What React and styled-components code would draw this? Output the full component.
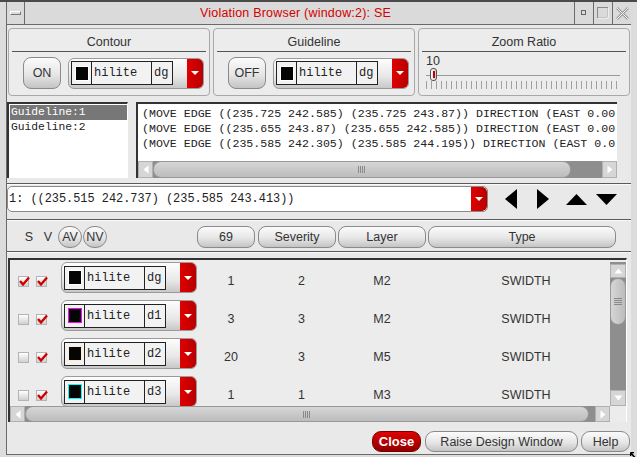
import React from 'react'
import styled, { createGlobalStyle } from 'styled-components'

const Global = createGlobalStyle`
  html, body { margin: 0; padding: 0; background: #d8d8d8; }
  body { font-family: "Liberation Sans", Arial, sans-serif; font-size: 12px; color: #333; }
`

const Screen = styled.div`
  width: 637px;
  height: 457px;
  background: #dcdcdc;
  border-top: 2px solid #4a4a4a;
  box-sizing: border-box;
  display: flex;
  flex-direction: column;
  overflow: hidden;
  position: relative;
`
const TitleBar = styled.div`
  height: 22px;
  margin-left: 6px;
  margin-right: 6px;
  display: flex;
  border-bottom: 1px solid #6a6a6a;
  border-left: 1px solid #6a6a6a;
  background: #dadada;
`
const MenuBox = styled.div`
  width: 17px;
  border-right: 1px solid #6a6a6a;
  display: flex;
  align-items: center;
  justify-content: center;
  span {
    width: 9px; height: 2px;
    border: 1px solid #777; border-top-color: #fff; border-left-color: #fff;
  }
`
const Title = styled.div`
  flex: 1;
  text-align: center;
  line-height: 22px;
  color: #d40000;
  font-size: 12.5px;
  letter-spacing: 0.2px;
  padding-right: 8px;
`
const WinBtn = styled.div`
  width: 18px;
  border-left: 1px solid #6a6a6a;
  display: flex;
  align-items: center;
  justify-content: center;
`
const Body = styled.div`
  flex: 1;
  margin-left: 6px;
  margin-right: 6px;
  margin-bottom: 2px;
  border-left: 1px solid #6a6a6a;
  border-bottom: 1px solid #6a6a6a;
  background: #e9e9e9;
  display: flex;
  flex-direction: column;
`
const TopRow = styled.div`
  margin-top: 3px;
  height: 68px;
  padding-left: 1px;
  display: flex;
  gap: 3px;
`
const Group = styled.div`
  width: ${p => p.$w}px;
  box-sizing: border-box;
  border: 1px solid #a8a8a8;
  border-radius: 4px;
  background: #ececec;
  padding: 0 3px;
  display: flex;
  flex-direction: column;
`
const GroupTitle = styled.div`
  height: 22px;
  border-bottom: 1px solid #555;
  text-align: center;
  line-height: 26px;
  font-size: 12.5px;
  color: #333;
`
const GroupContent = styled.div`
  display: flex;
  align-items: center;
  gap: 7px;
  padding-left: 11px;
  margin-top: 5px;
`
const PillButton = styled.div`
  width: ${p => p.$w}px;
  height: ${p => p.$h || 22}px;
  box-sizing: border-box;
  border: 1px solid #8a8a8a;
  border-radius: ${p => p.$r || 8}px;
  background: linear-gradient(#fbfbfb, #e6e6e6 55%, #c4c4c4);
  display: flex;
  align-items: center;
  justify-content: center;
  font-size: 12.5px;
  color: #333;
  flex-shrink: 0;
  margin-left: ${p => p.$ml || 0}px;
`
const Combo = styled.div`
  width: 136px;
  height: 31px;
  box-sizing: border-box;
  border: 1px solid #9a9a9a;
  border-radius: 6px;
  background: linear-gradient(#fdfdfd, #e8e8e8 60%, #c8c8c8);
  display: flex;
  align-items: center;
  padding-left: 2px;
  flex-shrink: 0;
  align-self: ${p => (p.$top ? 'flex-start' : 'auto')};
`
const ComboBox = styled.div`
  height: 24px;
  box-sizing: border-box;
  border: 1px solid #222;
  display: flex;
  background: #f2f2f2;
`
const SwatchCell = styled.div`
  width: 19px;
  border-right: 1px solid #222;
  display: flex;
  align-items: center;
  justify-content: center;
  span {
    width: 12px; height: 13px;
    background: #050505;
    border: 1px solid ${p => p.$ring};
  }
`
const NameCell = styled.div`
  width: ${p => p.$w}px;
  border-right: ${p => (p.$last ? 'none' : '1px solid #222')};
  font-family: "Liberation Mono", "Courier New", monospace;
  font-size: 12px;
  line-height: 22px;
  padding-left: 2px;
  box-sizing: border-box;
  color: #222;
`
const RedDrop = styled.div`
  margin-left: auto;
  width: 16px;
  height: 100%;
  border-radius: 0 5px 5px 0;
  background: linear-gradient(90deg, #e00000, #b80000);
  display: flex;
  align-items: center;
  justify-content: center;
  flex-shrink: 0;
  span {
    width: 0; height: 0;
    border-left: 4px solid transparent;
    border-right: 4px solid transparent;
    border-top: 4px solid #fff;
  }
`
const ZoomContent = styled.div`
  padding: 3px 0 0 4px;
  display: flex;
  flex-direction: column;
`
const ZoomValue = styled.div`
  font-size: 12.5px;
  line-height: 12px;
  color: #333;
`
const SliderTrack = styled.div`
  position: relative;
  margin-top: 8px;
  height: 1px;
  background: #999;
  width: 194px;
`
const SliderHandle = styled.div`
  position: absolute;
  left: 4px;
  top: -7px;
  width: 7px;
  height: 13px;
  box-sizing: border-box;
  border: 1px solid #555;
  border-radius: 3px;
  background: linear-gradient(90deg, #fff, #ccc);
  display: flex;
  justify-content: center;
  span { width: 2px; margin-top: 2px; height: 7px; background: #c00000; }
`
const Ticks = styled.div`
  margin-top: 5px;
  width: 192px;
  height: 8px;
  background: repeating-linear-gradient(90deg, #a0a0a0 0 1px, transparent 1px 5px);
`
const MidRow = styled.div`
  margin-top: 6px;
  height: 76px;
  display: flex;
  gap: 8px;
`
const ListBox = styled.div`
  width: 121px;
  box-sizing: border-box;
  border-top: 2px solid #333;
  border-left: 2px solid #333;
  border-right: 1px solid #fff;
  background: #fff;
  padding-top: 1px;
  padding-left: 1px;
`
const ListItem = styled.div`
  height: 15px;
  line-height: 15px;
  padding-left: 1px;
  font-family: "Liberation Mono", "Courier New", monospace;
  font-size: 11.3px;
  background: ${p => (p.$sel ? '#777' : 'transparent')};
  color: ${p => (p.$sel ? '#fff' : '#222')};
`
const TextPane = styled.div`
  width: 481px;
  box-sizing: border-box;
  border-top: 2px solid #333;
  border-left: 2px solid #333;
  background: #fff;
  display: flex;
  flex-direction: column;
  overflow: hidden;
`
const TextLines = styled.div`
  flex: 1;
  padding: 2px 0 0 4px;
  font-family: "Liberation Mono", "Courier New", monospace;
  font-size: 11.6px;
  line-height: 15px;
  white-space: pre;
  color: #222;
  overflow: hidden;
`
const HScroll = styled.div`
  height: ${p => p.$h || 16}px;
  display: flex;
  background: #8e8e8e;
  flex-shrink: 0;
`
const ArrowBtn = styled.div`
  width: 15px;
  height: 100%;
  background: #d6d6d6;
  border: 1px solid #b0b0b0;
  box-sizing: border-box;
  display: flex;
  align-items: center;
  justify-content: center;
  flex-shrink: 0;
`
const Thumb = styled.div`
  width: ${p => p.$w}px;
  height: 100%;
  box-sizing: border-box;
  border: 1px solid #999;
  border-radius: 8px;
  background: linear-gradient(#d6d6d6, #bcbcbc);
  display: flex;
  align-items: center;
  justify-content: center;
  flex-shrink: 0;
`
const Trough = styled.div`
  flex: 1;
`
const Grip = styled.div`
  width: 8px;
  height: 7px;
  background: ${p =>
    p.$v
      ? 'repeating-linear-gradient(#888 0 1px, transparent 1px 2px)'
      : 'repeating-linear-gradient(90deg, #888 0 1px, transparent 1px 2px)'};
`
const Separator = styled.div`
  margin-top: ${p => p.$mt}px;
  height: 1px;
  background: #5a5a5a;
  border-bottom: 1px solid #fafafa;
`
const PathRow = styled.div`
  margin-top: 1px;
  height: 26px;
  display: flex;
  align-items: center;
`
const PathInput = styled.div`
  width: 481px;
  height: 26px;
  box-sizing: border-box;
  border: 1px solid #8a8a8a;
  border-radius: 5px;
  background: #fff;
  display: flex;
  align-items: center;
  font-family: "Liberation Mono", "Courier New", monospace;
  font-size: 11.9px;
  color: #222;
  padding-left: 1px;
  overflow: hidden;
`
const NavGroup = styled.div`
  display: flex;
  align-items: center;
  margin-left: 17px;
  svg { display: block; flex-shrink: 0; }
`
const HeaderRow = styled.div`
  margin-top: 5px;
  height: 22px;
  display: flex;
  align-items: center;
`
const HeadLabel = styled.div`
  width: 12px;
  text-align: center;
  font-size: 12.5px;
  color: #333;
  flex-shrink: 0;
  margin-left: ${p => p.$ml}px;
`
const Table = styled.div`
  margin-top: 5px;
  margin-left: 1px;
  width: 619px;
  height: 164px;
  box-sizing: border-box;
  border-top: 2px solid #333;
  border-left: 2px solid #333;
  border-right: 1px solid #fff;
  display: grid;
  grid-template-columns: 1fr 16px;
  grid-template-rows: 1fr 16px;
  background: #ececec;
`
const Rows = styled.div`
  overflow: hidden;
  padding-top: 2px;
`
const Row = styled.div`
  height: 38px;
  display: flex;
  align-items: center;
  padding-left: 8px;
`
const Check = styled.div`
  width: 11px;
  height: 11px;
  box-sizing: border-box;
  border: 1px solid #b4b4b4;
  background: linear-gradient(#fff, #d0d0d0);
  margin-right: ${p => p.$mr}px;
  flex-shrink: 0;
  position: relative;
  svg { position: absolute; left: -1px; top: -2px; }
`
const Cell = styled.div`
  width: ${p => p.$w}px;
  text-align: center;
  font-size: 12.5px;
  color: #333;
  flex-shrink: 0;
`
const VScroll = styled.div`
  padding-top: 2px;
  display: flex;
  flex-direction: column;
  background: #8e8e8e;
  border-top: 2px solid #ececec;
`
const VArrow = styled.div`
  height: ${p => p.$h}px;
  background: #d6d6d6;
  border: 1px solid #b0b0b0;
  box-sizing: border-box;
  display: flex;
  align-items: center;
  justify-content: center;
  flex-shrink: 0;
  margin-top: ${p => (p.$end ? 'auto' : '0')};
`
const VThumb = styled.div`
  height: 47px;
  box-sizing: border-box;
  border: 1px solid #999;
  border-radius: 8px;
  background: linear-gradient(90deg, #d6d6d6, #bcbcbc);
  display: flex;
  align-items: center;
  justify-content: center;
`
const Corner = styled.div`
  background: #ececec;
`
const Footer = styled.div`
  margin-top: 9px;
  display: flex;
  justify-content: flex-end;
  gap: 3px;
  padding-right: 1px;
`
const CloseBtn = styled.div`
  width: 49px;
  height: 21px;
  box-sizing: border-box;
  border: 1px solid #700;
  border-radius: 9px;
  background: linear-gradient(#e00000, #b00000 60%, #900000);
  color: #fff;
  font-weight: bold;
  font-size: 13px;
  display: flex;
  align-items: center;
  justify-content: center;
  margin-right: 1px;
`
const Resize = styled.div`
  position: absolute;
  right: 0;
  bottom: 0;
  width: 7px;
  height: 8px;
`

const triUp = <svg width="9" height="6"><polygon points="0.5,5.5 4.5,0.5 8.5,5.5" fill="#fff" /></svg>
const triDown = <svg width="9" height="6"><polygon points="0.5,0.5 4.5,5.5 8.5,0.5" fill="#fff" /></svg>
const triLeft = <svg width="6" height="9"><polygon points="5.5,0.5 0.5,4.5 5.5,8.5" fill="#fff" /></svg>
const triRight = <svg width="6" height="9"><polygon points="0.5,0.5 5.5,4.5 0.5,8.5" fill="#fff" /></svg>

const CheckMark = () => (
  <svg width="13" height="12">
    <path d="M2 6 L5 9.5 L11 2.5" stroke="#d00000" strokeWidth="2.4" fill="none" />
  </svg>
)

const ColorCombo = ({ ring = '#fff', code, top }) => (
  <Combo $top={top}>
    <ComboBox>
      <SwatchCell $ring={ring}><span /></SwatchCell>
      <NameCell $w={60}>hilite</NameCell>
      <NameCell $w={20} $last>{code}</NameCell>
    </ComboBox>
    <RedDrop><span /></RedDrop>
  </Combo>
)

const rows = [
  { s: true, ring: '#ffffff', code: 'dg', count: '1', sev: '2', layer: 'M2' },
  { s: false, ring: '#ff00ff', code: 'd1', count: '3', sev: '3', layer: 'M2' },
  { s: false, ring: '#ffeccc', code: 'd2', count: '20', sev: '3', layer: 'M5' },
  { s: false, ring: '#00ffff', code: 'd3', count: '1', sev: '1', layer: 'M3' },
]

const lines = [
  '(MOVE EDGE ((235.725 242.585) (235.725 243.87)) DIRECTION (EAST 0.00',
  '(MOVE EDGE ((235.655 243.87) (235.655 242.585)) DIRECTION (EAST 0.00',
  '(MOVE EDGE ((235.585 242.305) (235.585 244.195)) DIRECTION (EAST 0.0',
]

export default function App() {
  return (
    <Screen>
      <Global />
      <TitleBar>
        <MenuBox><span /></MenuBox>
        <Title>Violation Browser (window:2): SE</Title>
        <WinBtn>
          <svg width="6" height="6"><rect x="0.5" y="0.5" width="4" height="4" fill="none" stroke="#666" /></svg>
        </WinBtn>
        <WinBtn>
          <svg width="12" height="12"><rect x="0.5" y="0.5" width="10" height="10" fill="none" stroke="#888" /><path d="M1 11 H11 V1" stroke="#fff" fill="none" /></svg>
        </WinBtn>
        <WinBtn>
          <svg width="13" height="13"><path d="M1 1 L12 12 M12 1 L1 12" stroke="#999" strokeWidth="2.5" /><path d="M1 1 L12 12 M12 1 L1 12" stroke="#f4f4f4" strokeWidth="1" /></svg>
        </WinBtn>
      </TitleBar>
      <Body>
        <TopRow>
          <Group $w={202}>
            <GroupTitle>Contour</GroupTitle>
            <GroupContent>
              <PillButton $w={38} $h={32} $r={8}>ON</PillButton>
              <ColorCombo code="dg" />
            </GroupContent>
          </Group>
          <Group $w={202}>
            <GroupTitle>Guideline</GroupTitle>
            <GroupContent>
              <PillButton $w={38} $h={32} $r={8}>OFF</PillButton>
              <ColorCombo code="dg" />
            </GroupContent>
          </Group>
          <Group $w={212}>
            <GroupTitle>Zoom Ratio</GroupTitle>
            <ZoomContent>
              <ZoomValue>10</ZoomValue>
              <SliderTrack>
                <SliderHandle><span /></SliderHandle>
              </SliderTrack>
              <Ticks />
            </ZoomContent>
          </Group>
        </TopRow>

        <MidRow>
          <ListBox>
            <ListItem $sel>Guideline:1</ListItem>
            <ListItem>Guideline:2</ListItem>
          </ListBox>
          <TextPane>
            <TextLines>{lines.join('\n')}</TextLines>
            <HScroll $h={17}>
              <ArrowBtn>{triLeft}</ArrowBtn>
              <Thumb $w={418}><Grip /></Thumb>
              <Trough />
              <ArrowBtn>{triRight}</ArrowBtn>
            </HScroll>
          </TextPane>
        </MidRow>

        <Separator $mt={5} />
        <PathRow>
          <PathInput>
            1: ((235.515 242.737) (235.585 243.413))
            <RedDrop><span /></RedDrop>
          </PathInput>
          <NavGroup>
            <svg width="12" height="20"><polygon points="12,0 0,10 12,20" fill="#000" /></svg>
            <svg width="12" height="20" style={{ marginLeft: 20 }}><polygon points="0,0 12,10 0,20" fill="#000" /></svg>
            <svg width="21" height="11" style={{ marginLeft: 17 }}><polygon points="0,11 10.5,0 21,11" fill="#000" /></svg>
            <svg width="21" height="11" style={{ marginLeft: 9 }}><polygon points="0,0 10.5,11 21,0" fill="#000" /></svg>
          </NavGroup>
        </PathRow>
        <Separator $mt={7} />

        <HeaderRow>
          <HeadLabel $ml={16}>S</HeadLabel>
          <HeadLabel $ml={7}>V</HeadLabel>
          <PillButton $w={24} $h={22} $r={11} $ml={4}>AV</PillButton>
          <PillButton $w={24} $h={22} $r={11} $ml={1}>NV</PillButton>
          <PillButton $w={58} $ml={90}>69</PillButton>
          <PillButton $w={78} $ml={3}>Severity</PillButton>
          <PillButton $w={88} $ml={2}>Layer</PillButton>
          <PillButton $w={188} $ml={2}>Type</PillButton>
        </HeaderRow>
        <Separator $mt={3} />

        <Table>
          <Rows>
            {rows.map((r, i) => (
              <Row key={i}>
                <Check $mr={7}>{r.s && <CheckMark />}</Check>
                <Check $mr={14}><CheckMark /></Check>
                <ColorCombo ring={r.ring} code={r.code} top />
                <Cell $w={68}>{r.count}</Cell>
                <Cell $w={73}>{r.sev}</Cell>
                <Cell $w={88}>{r.layer}</Cell>
                <Cell $w={200}>SWIDTH</Cell>
              </Row>
            ))}
          </Rows>
          <VScroll>
            <VArrow $h={14}>{triUp}</VArrow>
            <VThumb><Grip $v /></VThumb>
            <VArrow $h={16} $end>{triDown}</VArrow>
          </VScroll>
          <HScroll>
            <ArrowBtn>{triLeft}</ArrowBtn>
            <Thumb $w={564}><Grip /></Thumb>
            <Trough />
            <ArrowBtn>{triRight}</ArrowBtn>
          </HScroll>
          <Corner />
        </Table>

        <Footer>
          <CloseBtn>Close</CloseBtn>
          <PillButton $w={153} $h={21} $r={9}>Raise Design Window</PillButton>
          <PillButton $w={49} $h={21} $r={9}>Help</PillButton>
        </Footer>
      </Body>
      <Resize>
        <svg width="7" height="8"><path d="M0.5 0.5 L6.5 7.5 M0.5 0.5 H4 M0.5 0.5 V4" stroke="#000" strokeWidth="1.6" /></svg>
      </Resize>
    </Screen>
  )
}
